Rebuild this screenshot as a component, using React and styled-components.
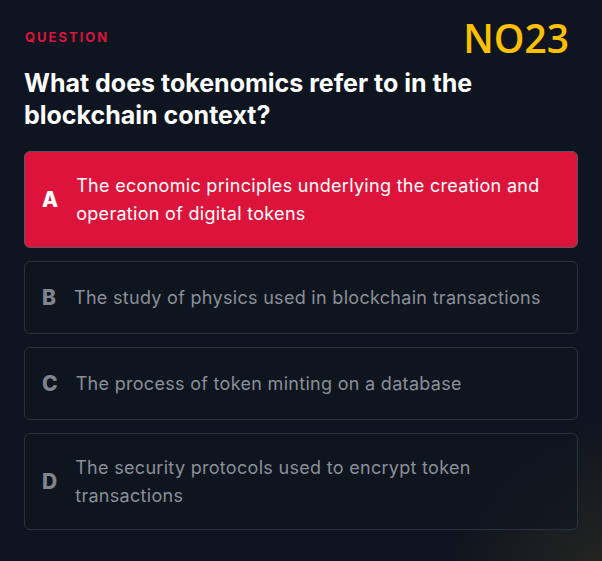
import styled, { createGlobalStyle } from "styled-components";

const GlobalStyle = createGlobalStyle`
  html, body {
    margin: 0;
    padding: 0;
    background: #0f1520;
  }
  body {
    font-family: Inter, "Liberation Sans", sans-serif;
  }
`;

const opcoes = [
  { letra: "A", texto: "The economic principles underlying the creation and operation of digital tokens", ativa: true },
  { letra: "B", texto: "The study of physics used in blockchain transactions" },
  { letra: "C", texto: "The process of token minting on a database" },
  { letra: "D", texto: "The security protocols used to encrypt token transactions" },
];

const App = () => {
  return (
    <>
      <GlobalStyle />
      <Pagina>
        <Topo>
          <Rotulo>Question</Rotulo>
          <Numero>NO23</Numero>
        </Topo>
        <Pergunta>What does tokenomics refer to in the blockchain context?</Pergunta>
        <Lista>
          {opcoes.map((o) => (
            <Opcao key={o.letra} $ativa={o.ativa}>
              <Letra $ativa={o.ativa}>{o.letra}</Letra>
              <Texto $ativa={o.ativa}>{o.texto}</Texto>
            </Opcao>
          ))}
        </Lista>
      </Pagina>
    </>
  );
};

export default App;

const Pagina = styled.main`
  box-sizing: border-box;
  width: 602px;
  height: 561px;
  padding: 15px 24px 0;
  background:
    radial-gradient(circle at 620px 590px, rgba(120, 100, 40, 0.24), rgba(15, 21, 32, 0) 170px),
    #0f1520;
  overflow: hidden;
`;

const Topo = styled.div`
  display: flex;
  justify-content: space-between;
  align-items: center;
  height: 44px;
`;

const Rotulo = styled.span`
  color: #dc143c;
  font-size: 13px;
  font-weight: 700;
  letter-spacing: 2px;
  text-transform: uppercase;
  margin-left: 1px;
`;

const Numero = styled.span`
  color: #ffc000;
  font-family: "Open Sans", "Noto Sans", sans-serif;
  font-size: 39px;
  font-weight: 600;
  margin-right: 9px;
  line-height: 1;
`;

const Pergunta = styled.h2`
  margin: 8px 0 20px;
  color: #ffffff;
  font-size: 25px;
  font-weight: 700;
  line-height: 32px;
  max-width: 480px;
`;

const Lista = styled.div`
  display: flex;
  flex-direction: column;
  gap: 13px;
`;

const Opcao = styled.div`
  display: flex;
  align-items: center;
  gap: 18px;
  padding: 19.5px 16px 19.5px 17px;
  border: 1px solid ${(p) => (p.$ativa ? "#5a5560" : "#2c323d")};
  border-radius: 6px;
  background: ${(p) => (p.$ativa ? "#dc143c" : "rgba(15, 21, 32, 0.6)")};
`;

const Letra = styled.span`
  flex: none;
  font-size: 21px;
  line-height: 32px;
  font-weight: 800;
  color: ${(p) => (p.$ativa ? "#ffffff" : "#80858d")};
`;

const Texto = styled.span`
  font-size: 18px;
  letter-spacing: 0.3px;
  line-height: 28px;
  color: ${(p) => (p.$ativa ? "#ffffff" : "#8a8f98")};
`;
